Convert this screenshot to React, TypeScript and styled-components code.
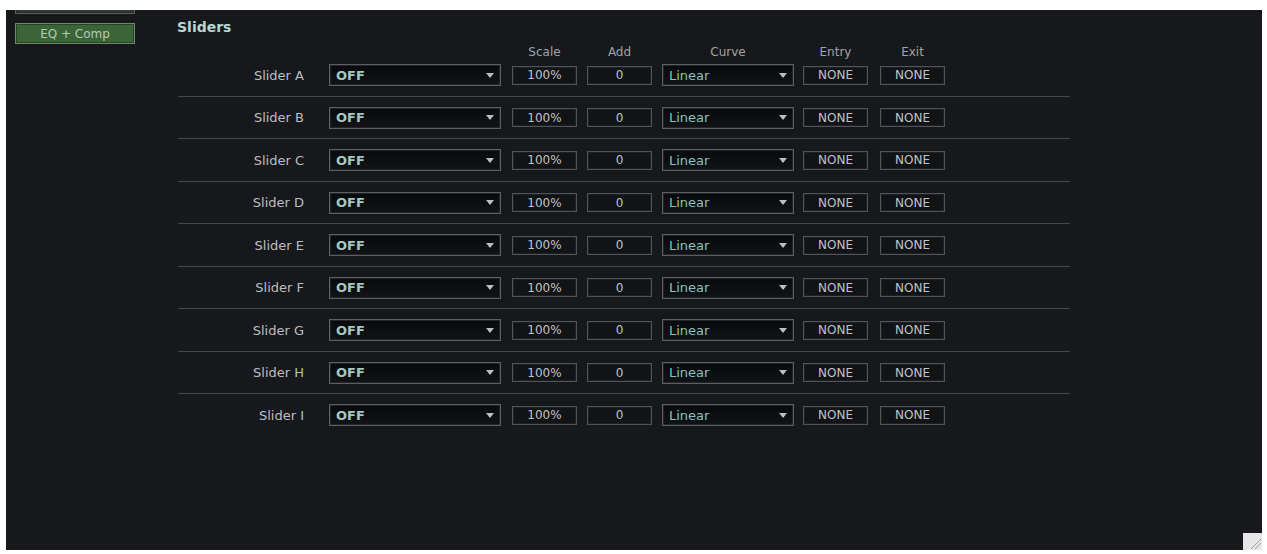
import React from 'react';
import styled, { createGlobalStyle } from 'styled-components';

const GlobalStyle = createGlobalStyle`
  html, body {
    margin: 0;
    padding: 0;
    background: #ffffff;
  }
  body {
    font-family: "DejaVu Sans", "Liberation Sans", sans-serif;
  }
`;

const sliders = ['A', 'B', 'C', 'D', 'E', 'F', 'G', 'H', 'I'];

// left offset and width of each control column, after the label
const cols = [
  { name: 'Scale', left: 11, width: 65 },
  { name: 'Add', left: 10, width: 65 },
  { name: 'Curve', left: 10, width: 132 },
  { name: 'Entry', left: 9, width: 65 },
  { name: 'Exit', left: 12, width: 65 },
];

const Page = styled.div`
  padding: 10px 5px 4px 6px;
  height: 554px;
  box-sizing: border-box;
`;

const Panel = styled.div`
  position: relative;
  display: flex;
  gap: 43px;
  height: 540px;
  padding: 0 9px;
  background: #16181c;
  overflow: hidden;
`;

const Sidebar = styled.div`
  display: flex;
  flex-direction: column;
  gap: 9px;
  width: 120px;
  margin-top: -17px;
`;

const SideButton = styled.div<{ $active?: boolean }>`
  height: 21px;
  box-sizing: border-box;
  display: flex;
  align-items: center;
  justify-content: center;
  font-size: 12px;
  color: ${(p) => (p.$active ? '#b4cdae' : '#9aa39a')};
  background: ${(p) => (p.$active ? '#3b6439' : '#353b36')};
  border: 1px solid ${(p) => (p.$active ? '#6c8a68' : '#5c625c')};
  box-shadow: inset 0 0 0 1px rgba(0, 0, 0, 0.3);
`;

const Main = styled.div`
  padding-top: 8px;
  width: 892px;
`;

const Title = styled.div`
  font-size: 14px;
  line-height: 18px;
  font-weight: bold;
  color: #b7d6d4;
  margin-left: -1px;
`;

const Line = styled.div`
  display: flex;
  align-items: center;
`;

const Header = styled(Line)`
  margin-top: 9px;
  height: 14px;
  padding-left: 323px;
  font-size: 12px;
  line-height: 14px;
  color: #a0a2a4;
`;

const HeadCell = styled.div<{ $left: number; $width: number }>`
  margin-left: ${(p) => p.$left}px;
  width: ${(p) => p.$width}px;
  text-align: center;
`;

const Row = styled(Line)`
  padding: 5px 0 9.5px;

  & + & {
    border-top: 1px solid #43464b;
    padding-top: 10px;
  }
`;

const Label = styled.div`
  width: 126px;
  text-align: right;
  font-size: 13px;
  color: #bcbec0;
`;

const Select = styled.div<{ $left: number; $width: number }>`
  margin-left: ${(p) => p.$left}px;
  width: ${(p) => p.$width}px;
  height: 22px;
  box-sizing: border-box;
  display: flex;
  align-items: center;
  justify-content: space-between;
  padding: 0 6px;
  background: linear-gradient(#08090b, #111316);
  border: 1px solid #5b5e62;
  box-shadow: inset 0 0 0 1px #232529;
  font-size: 13px;
`;

const SelectText = styled.span<{ $color: string; $bold?: boolean }>`
  color: ${(p) => p.$color};
  font-weight: ${(p) => (p.$bold ? 'bold' : 'normal')};
`;

const Arrow = styled.span`
  width: 0;
  height: 0;
  border-left: 4.5px solid transparent;
  border-right: 4.5px solid transparent;
  border-top: 5px solid #bcbec0;
`;

const Box = styled.div<{ $left: number; $width: number }>`
  margin-left: ${(p) => p.$left}px;
  width: ${(p) => p.$width}px;
  height: 19px;
  box-sizing: border-box;
  display: flex;
  align-items: center;
  justify-content: center;
  background: #111316;
  border: 1px solid #505357;
  box-shadow: inset 0 0 0 1px #1e2024;
  font-size: 12px;
  color: #c0c2c4;
`;

const Grip = styled.svg`
  position: absolute;
  right: 0;
  bottom: 0;
  width: 19px;
  height: 17px;
  background: #e6e6e6;
`;

const SliderRow = ({ name }: { name: string }) => {
  const [scale, add, curve, entry, exit] = cols;
  return (
    <Row>
      <Label>Slider {name}</Label>
      <Select $left={25} $width={172}>
        <SelectText $color="#a6c7be" $bold>
          OFF
        </SelectText>
        <Arrow />
      </Select>
      <Box $left={scale.left} $width={scale.width}>100%</Box>
      <Box $left={add.left} $width={add.width}>0</Box>
      <Select $left={curve.left} $width={curve.width}>
        <SelectText $color="#90c0b2">Linear</SelectText>
        <Arrow />
      </Select>
      <Box $left={entry.left} $width={entry.width}>NONE</Box>
      <Box $left={exit.left} $width={exit.width}>NONE</Box>
    </Row>
  );
};

const App = () => {
  return (
    <Page>
      <GlobalStyle />
      <Panel>
        <Sidebar>
          <SideButton />
          <SideButton $active>EQ + Comp</SideButton>
        </Sidebar>
        <Main>
          <Title>Sliders</Title>
          <Header>
            {cols.map((c) => (
              <HeadCell key={c.name} $left={c.left} $width={c.width}>
                {c.name}
              </HeadCell>
            ))}
          </Header>
          {sliders.map((s) => (
            <SliderRow key={s} name={s} />
          ))}
        </Main>
        <Grip viewBox="0 0 19 17">
          <line x1="8" y1="16" x2="18" y2="6" stroke="#a0a0a0" strokeWidth="1" />
          <line x1="12" y1="16" x2="18" y2="10" stroke="#a0a0a0" strokeWidth="1" />
        </Grip>
      </Panel>
    </Page>
  );
};

export default App;
